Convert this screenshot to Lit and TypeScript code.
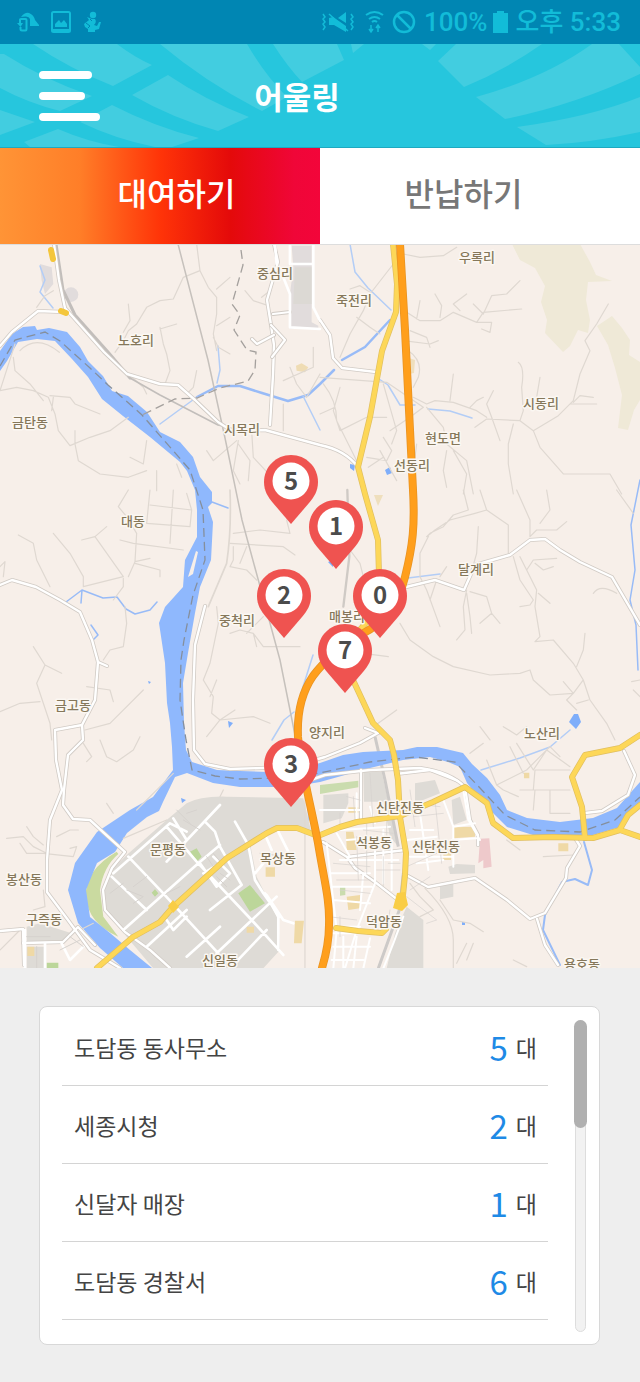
import { LitElement, html, svg, css } from "lit";
import { customElement, state } from "lit/decorators.js";

interface Station { name: string; count: number; }
interface Pin { x: number; y: number; count: number; }

const STATIONS: Station[] = [
  { name: "도담동 동사무소", count: 5 },
  { name: "세종시청", count: 2 },
  { name: "신달자 매장", count: 1 },
  { name: "도담동 경찰서", count: 6 },
];

// Tip of each pin, in map units (640 x 723).
const PINS: Pin[] = [
  { x: 291, y: 279, count: 5 },
  { x: 336, y: 324, count: 1 },
  { x: 284, y: 393, count: 2 },
  { x: 380, y: 393, count: 0 },
  { x: 345, y: 448, count: 7 },
  { x: 291, y: 562, count: 3 },
];

const PLACES: [string, number, number][] = [
  ["중심리", 275, 278], ["우록리", 477, 262], ["죽전리", 354, 305], ["노호리", 136, 345],
  ["금탄동", 30, 427], ["시목리", 242, 434], ["시동리", 541, 408], ["현도면", 443, 443],
  ["선동리", 412, 470], ["대동", 133, 526], ["달계리", 476, 574], ["중척리", 237, 625],
  ["매봉리", 347, 621], ["금고동", 73, 710], ["양지리", 327, 737], ["노산리", 542, 738],
  ["문평동", 168, 854], ["신탄진동", 400, 812], ["석봉동", 374, 847], ["신탄진동", 436, 851],
  ["목상동", 278, 863], ["봉산동", 24, 884], ["구즉동", 44, 924], ["덕암동", 384, 926],
  ["신일동", 220, 965], ["용호동", 582, 969],
];

const ORANGE = "M400 244L405 330L410 430L413 490C415 525 413 545 405 577C398 605 385 622 362 634C340 647 325 660 313 676C300 695 297 715 298 737C301 770 311 805 318 843C324 880 330 900 329 925C329 945 325 958 322 968";
const YELLOWS = [
  "M393 244L397 284L396 312L382 351L370 417L358 467L365 494L378 540L379 575L377 610L358 632L345 655L353 680L373 723L390 740L394 755L398 780L400 817L406 853L405 875L402 905",
  "M97 968L133 937L160 922L173 907L227 858L267 833L277 828L297 828L318 836L340 827L357 822L400 816L433 802L465 787L487 803L493 823L513 838L553 837L593 838L620 830L640 837",
  "M620 829L628 815L640 805",
  "M585 838L582 807L572 777L585 755L620 748L640 735",
  "M336 928L358 931L382 933L386 929",
];
const WHITES = [
  "M0 346L12 332L38 311L64 312",
  "M54 244L59 280L65 308L104 352L127 374L160 384L178 385L195 400L218 422L232 431L265 430L320 445Q345 450 358 467",
  "M274 244L278 262L267 300L271 325L274 345L273 375L270 425",
  "M320 320L330 335L333 358L342 368L376 372",
  "M0 585L12 580L36 587L60 600L80 612L92 640L98 662L95 700L82 725L55 730L56 760L62 790L50 820L47 860L47 892L68 920L90 950L120 968",
  "M98 662L107 666", "M82 725L83 740L68 755L64 790L63 805L73 819L90 820L103 832L125 852L112 868L103 890L105 910L125 932L150 950L170 968",
  "M205 606L195 645L193 700L194 750L205 764L230 769L290 767L325 757L360 743L378 733",
  "M290 787L325 775L370 770L420 768Q450 772 465 787L470 820L478 835L478 845",
  "M406 587L435 580L464 590L475 565L510 555L530 540L545 539L560 550L580 562L612 577L640 625",
  "M396 774L430 770L458 781", "M378 733L365 728", "M575 838L580 846L567 868L566 878L545 913L530 919L507 900L475 878L428 887L408 876",
  "M537 919L545 945L558 965", "M624 751L635 775L628 795L602 811L585 813",
  "M361 770L361 818", "M323 842L347 857L405 850", "M347 857L355 868L375 882L398 900",
  "M0 931L23 929L24 965", "M23 943L63 942L78 927L95 945",
];
const RIVER = "M0 351L12 334L23 327L35 326L37 330L49 328L67 332L80 347L88 361L103 376L112 391L128 396L147 412L160 432L180 442L193 457L200 477L212 492L212 503L208 507L213 522L211 560L200 587L195 613L188 653L183 683L184 723L186 750L192 762L217 770L240 771L267 772L295 770L320 763L343 755L363 752L403 750L417 747L437 747L463 753L472 764L487 778L500 795L507 810L527 818L560 822L593 818L617 808L640 782V802L620 827L593 835L533 835L507 827L490 810L467 783L460 767L448 762L430 757L403 760L370 768L320 782L290 787L240 787L213 783L187 773L175 777L163 802L159 811L147 817L127 833L115 852L97 863L86 890L90 917L110 933L130 950L152 968H123L100 948L78 923L68 890L75 863L97 832L130 810L153 797L173 770L172 747L170 723L167 703L165 663L159 623L165 607L183 587L185 560L197 537L197 510L195 490L187 471L180 462L150 437L123 416L102 399L88 377L72 359L55 341L37 339L18 342L7 361L0 371Z";

const mapArt = () => svg`
  <rect y="244" width="640" height="726" fill="#f7efe9"/>
  <path fill="#efe9d7" d="M512 244H580L590 262L596 275L612 281L588 282L586 300L590 320L588 333L578 330L570 346L563 352L545 333L547 320L541 302L545 286L535 268L520 260Z"/>
  <path fill="#efe9d7" d="M597 326L612 316L622 328L630 340L629 355L640 362V400L634 410L628 430L618 428L622 395L615 368L608 345Z"/>
  <g transform="translate(0 244) scale(.3333)">
    <g fill="#e1dcdc"><path d="M875 5H935V235L955 245V255L870 255V150L880 70Z"/><path d="M120 60L155 70L160 120L135 150L125 110Z"/><circle cx="213" cy="152" r="22"/></g>
    <path fill="#dcd9d4" d="M885 70H935V180H880Z"/>
    <path fill="#efdcb4" d="M888 365L905 358L925 370L915 385L890 380Z"/>
  </g>
  <path fill="#efdfbd" d="M409 358L415 360L414 373L409 374ZM374 495L383 495L378 506Z"/>
  <g transform="translate(0 730) scale(.3333)">
    <path fill="#dedbd6" d="M500 270L560 220Q600 198 680 200L910 205L935 310L880 292L820 300L750 340L770 440L800 500L835 570L840 660L790 715H460L380 620L320 540L310 480L335 420L380 375Z"/>
    <path fill="#dedbd6" d="M80 590L120 580L215 610L180 640H80ZM80 650H135V715H80Z"/>
    <path fill="#cadaa0" d="M350 365Q255 420 257 500Q265 580 355 620L310 560L300 480Q310 410 355 372Z"/>
    <path fill="#bcd69a" d="M570 365L590 355L605 380L590 395ZM715 490L750 465L795 520L750 545ZM455 488L465 478L475 490L465 500ZM140 698H175V715H140Z"/>
    <path fill="#efd9a6" d="M797 412H825V440H797ZM885 572H912L905 640H882ZM740 590H762V608H740ZM82 650H103V678H82Z"/>
  </g>
  <g transform="translate(320 730) scale(.3333)">
    <path fill="#dedbd6" d="M130 125L185 125L235 350L210 320L190 215H132ZM10 195L85 190V220L65 265L10 280ZM285 160L345 150L360 190L285 220ZM395 210L420 200L440 270L400 285ZM385 410L410 402L465 405V430L390 432ZM360 465L400 460V500L360 508ZM260 530L310 570V715H200L225 610Z"/>
    <path fill="#cadcae" d="M0 165L115 152V172L0 192ZM60 470L76 468V495L60 497Z"/>
    <path fill="#efd9a6" d="M78 305H100L110 360H80ZM400 292L465 290V320L400 325ZM370 345H393V390H370ZM80 500L120 495V535L85 540ZM715 340H745V364H715ZM612 128H628V145H612ZM85 232H115V248H85Z"/>
    <path fill="#eec9cb" d="M480 326L508 325L515 410L490 415V390L475 400Z"/>
    <path stroke="#cdcac8" stroke-width="9" fill="none" d="M165 20L195 150L235 350M250 430L238 540L175 715"/>
  </g>
  <path d="${RIVER}" fill="#8fb8fd"/>
  <path d="M188 577L196 551L198 552L193 574Z" fill="#f7efe9"/>
  <g fill="none" stroke="#98bbf7" stroke-linecap="round" stroke-linejoin="round">
    <path stroke-width="2.5" d="M197 397L218 386L240 386L262 393L288 401L308 395L320 384L334 370M342 360L365 347L390 320"/>
    <path stroke-width="1.5" stroke="#b3cdf6" d="M160 424L175 413L197 397M217 383L220 370L218 346M303 396L320 430M350 244L355 272L368 288L391 310M376 377L388 385L400 405L415 405M428 409L450 411L472 418M40 266L45 280L40 292L53 308"/>
    <path stroke-width="1.5" d="M66 602L82 590L103 598L117 597L126 609L135 614L150 610L157 602M82 590L81 603M91 625L98 635L93 640M212 502L228 508M640 480L631 525L635 570L630 600L636 625L638 670"/>
    <path stroke-width="1.5" stroke="#b3cdf6" d="M272 740L284 720L294 712M302 690L313 655M481 770L520 758L550 747L570 730M306 790L309 820M408 578L440 574M482 563L510 555"/>
    <path stroke-width="2" d="M584 842L592 870L588 885L575 879L562 882L545 915L543 930L560 965"/>
  </g>
  <path fill="#7faefa" d="M569 722L574 714H578L581 722L576 729ZM350 464L355 465L354 471L350 468ZM385 470L390 467L392 473L387 475ZM181 798L186 800L182 803ZM228 721L233 723L229 728ZM328 562L333 560V567ZM148 681L151 682L149 684ZM462 922L465 922V925H462Z"/>
  <g fill="none" stroke="#dfd8d1" stroke-width="3.6" stroke-linejoin="round" stroke-linecap="round">
    <g transform="translate(0 244) scale(.3333)">
      <path d="M110 190L135 155L160 140M345 325L370 290L385 260L410 240L440 190L480 170L520 165L550 100L600 80L625 130L650 160V210L640 270L650 320M600 80L590 0M650 135L690 100M650 245L690 220M640 280L655 310L690 330M385 180L390 230L370 265M480 250L490 300L500 330L510 380L495 420M480 255L530 240M385 390L430 430L440 450M0 440L50 430L100 440L145 460L165 510L175 560L210 605L270 580L330 560L385 520M40 340L45 380L90 420L130 470M60 320Q110 270 178 325M150 455L210 460L225 480L300 510M225 560L225 600L235 650L300 690L385 700L440 680M440 590L430 660L390 640M0 440L45 300M545 700L530 660M470 680V740M620 620L640 650L710 590M715 600L750 650L745 710M755 560L760 640L830 715M715 590L700 680L720 720M940 310V370L850 410M735 140L760 170L805 185M785 160L810 140M870 370L890 420L920 460L960 390M850 480L850 560M590 380L580 430L560 450M160 460L155 500"/>
    </g>
    <g transform="translate(320 244) scale(.3333)">
      <path d="M250 30L300 40L370 35L410 10M220 60L150 150L130 200L90 270L60 340M245 195L300 230H360L400 205L470 235L490 205L605 195M460 180L490 210L515 155L560 150L600 110M345 150L365 185L360 220M440 150L400 180L420 200M300 170L290 225M470 235L515 235L510 265L485 255M250 290L330 300L355 290M270 260L320 280L330 310M110 220L150 250L180 270M90 135L120 125L150 145M265 320Q310 350 295 400L280 430M595 355Q615 370 605 430L610 500L600 530M660 400L650 460L670 480M865 180L830 240L795 290L810 320L780 390L760 470L715 515L640 560L600 530L500 525L465 550M750 480H830M760 475L780 455L820 460M400 390L390 470M520 440L500 480L515 520L540 590M450 490L470 470L490 460M280 460L320 480L345 470L400 475L470 500L500 520M0 400L200 415L310 490M310 490L270 520L210 560M320 490L370 550L380 600L440 650L460 750M580 540L565 600V660L580 750M640 560L660 610L730 690H870L905 750M190 420L210 490L230 560L215 600M60 430L40 500L60 560L140 520L200 520M140 640L200 650L215 620L190 580M380 620L370 680L380 730M400 620L440 690L430 750M290 600L280 680M10 420Q50 470 50 530L110 650M180 620L230 710M145 670L190 640M0 510L45 490"/>
    </g>
    <g transform="translate(0 490) scale(.3333)">
      <path d="M385 0L355 50L380 80L410 130L405 215L385 260M360 150L400 160L550 180M450 0L440 100L570 110L575 60L450 45M520 0L510 160M575 60L560 10M405 215L450 205M405 220L480 240V260M55 135L100 160L110 210L150 290M160 130L210 190L250 260V290L370 260L285 140L245 150M285 140L320 110M370 265V290L340 330M375 350L380 400L370 470L330 480L310 510M100 470L135 525L110 580L130 640L150 700L155 750M135 525L185 550M0 665L60 640L120 635M260 590L330 600L340 635M255 720L330 700L430 600M0 230L15 215L10 260M650 350L655 400L630 520L610 570L640 620L635 670L660 690L760 680L810 700M700 170V210L690 230L740 240L770 270M700 130L780 120L870 130L860 90M690 160L850 170L885 195M740 170L720 220M690 430L720 420L760 430L790 470H900M740 430L770 400L790 380M760 430L770 470M650 570L630 620M660 690L620 740M660 690L705 660"/>
      <path d="M690 0Q695 120 680 220L625 350" stroke-width="5"/>
    </g>
    <g transform="translate(320 490) scale(.3333)">
      <path d="M430 0L445 60L400 75L370 110L330 130L300 190V260L320 300L360 410M330 130L320 140L345 120L390 90L465 70L500 60L565 105V190M480 0L500 60M590 0L630 90V140L650 120L710 120L740 95M680 0L690 60L660 100M475 110L470 190L450 260M440 300L430 350L435 420L410 450M450 305L500 320L515 370L540 400M440 310L450 380L455 430M515 370L480 400M600 200L620 240L650 300L645 350L660 440L645 455L700 450L760 520L790 570L810 630L860 700L885 750M580 200L600 270L640 330L630 345L600 350M620 240L640 210L710 205M655 310L690 340M645 220L670 240L700 230M240 400L270 450L340 500L400 530L510 555L600 550L630 540L640 570L690 615L760 610L790 570M795 430L790 480L770 530M730 575L760 610L740 630L770 660M770 640L805 630M130 490L205 500M230 660L160 710M90 180L120 220L130 260M350 270L330 330M380 230L360 260M890 0L940 70M820 310Q840 280 890 310M480 710L510 750M550 710L590 735L620 710M960 570L935 575M940 600L960 620M0 600"/>
      <path d="M82 0L88 200L70 350" stroke="#cfcac5" stroke-width="7"/>
    </g>
    <g transform="translate(0 730) scale(.3333)">
      <path d="M250 40L275 80L260 95M300 30L320 80L350 95L400 60L420 20M320 220L340 250M80 290L100 320L130 345M20 325L70 320L100 350L140 370M60 340L80 370H130L220 380L230 350L210 355M170 320L210 300L235 300M130 480L135 530L100 540M0 660L60 600M240 600L280 580M410 240L520 130M370 325L500 270M670 180L660 200M915 200V715M860 180V200"/>
    </g>
    <g transform="translate(320 730) scale(.3333)">
      <path d="M500 90L530 165L620 120L690 50L720 80M530 165L550 180L595 200M570 50L610 130M590 40L640 120L680 60L750 110M640 180L645 120H750M645 180L640 240M600 180H750M690 180V250H750M450 70L490 40M360 510L400 570L450 580L490 605M560 330L600 360M670 380L760 375M315 475Q400 560 400 630V715M270 460L300 500L340 540L300 560M440 640L410 700M460 640L440 690M620 710L580 690"/>
    </g>
    <path stroke-width="1.5" stroke="#c6c1bc" d="M178 244L208 360L225 438L242 520L280 660L296 740"/>
    <path stroke-width="3" stroke="#c2bebb" d="M56 244L63 290L75 315L108 352L130 378"/>
    <path stroke-width="1.5" stroke="#c2bebb" d="M130 378L160 395L218 425L240 430"/>
  </g>
  <g fill="none" stroke="#a4a09d" stroke-width="1.3" stroke-dasharray="9 5">
    <path d="M241 250L243 265L232 304L240 315L234 330L247 350L256 352L255 370L248 381L220 388L197 398L175 399L142 415"/>
    <path d="M0 366L15 340L45 332L60 341L90 368L108 385L142 415L190 470L203 510L205 560L193 595L184 640L181 660L180 700L186 740L192 770L215 776L240 779L280 778L320 773L370 762L415 757L455 762L480 788L505 815L535 830L580 832L615 820L640 797" stroke="#858f9d"/>
  </g>
  <g fill="none" stroke-linejoin="round" stroke-linecap="round">
    ${WHITES.map((d) => svg`<path d="${d}" stroke="#d1cbc5" stroke-width="4"/>`)}
    ${WHITES.map((d) => svg`<path d="${d}" stroke="#fff" stroke-width="2.4"/>`)}
    <path stroke="#d1cbc5" stroke-width="4" d="M273 314L290 312M274 335L257 344L252 339M271 325L285 340L272 357"/>
    <path stroke="#fff" stroke-width="2.2" d="M273 314L290 312M274 335L257 344L252 339M271 325L285 340L272 357"/>
    <g stroke="#fff" stroke-width="8">
      <path transform="translate(0 244) scale(.3333)" d="M825 0L830 60M940 0V190L960 230M870 0V60H935M850 100L870 150V250L960 255"/>
      <path transform="translate(0 730) scale(.3333)" d="M335 440L440 540M385 380L485 485L655 670M370 600L595 400L660 345M500 290L590 395L755 570L850 675M340 430L510 280L560 305M500 395L660 225M615 275L645 305L660 350L725 465L630 540M705 275L745 345L765 450L790 490L840 560M800 495L850 570L880 580M795 490L835 560V660M520 265L560 330M440 650L560 540M560 680L660 590M650 670L830 500M800 600L690 715M500 570L520 600L560 560M800 325L815 360M835 305L865 365M75 600V715M135 640V715M185 640L210 690L250 650M600 400L650 470L690 430L640 380M610 430L660 400M790 400L765 430"/>
      <path transform="translate(320 730) scale(.3333)" stroke-width="6" d="M20 340L50 600L40 715M50 310L90 380M370 210L400 290V410M300 250L325 420M430 180L445 270L480 330M45 590H120M30 610H180M165 360V460L110 600L75 715M130 430L120 540M60 390H235M30 430H150M40 470H155M40 510L150 520M190 300V460M215 330V480M150 230L165 280M60 300L210 290M80 330L200 320M270 300H340M260 330L350 320M290 400L370 390M0 240H120M110 190V270M400 290L465 280M395 330L470 325M270 380H400M70 620V715M110 620L100 715M150 625L130 715M40 650H150M35 690H130M250 560L220 640L190 715"/>
    </g>
    <g stroke="#d6d2ce" stroke-width="2">
      <path transform="translate(320 730) scale(.3333)" d="M60 250V300M100 200L105 270M150 130L160 290M200 270V340M40 400L150 410M50 450H150M60 480L150 490M110 320L115 450M140 270V430M270 220L360 230M280 260L370 250M345 210L365 400M270 180L285 290M190 380V470M205 400H240M170 420H240M260 410L350 370M270 480L330 440M260 500L350 570L320 580M25 560L110 570M130 300L220 310M80 200L120 210M60 560V620M210 540L200 600"/>
      <path transform="translate(0 730) scale(.3333)" stroke-width="3" d="M400 470L440 440M380 480L430 500L400 520M530 240L570 280M560 250L590 240M550 270L600 300M330 490L370 460M500 490L540 470M110 650V715M80 620H150M210 620L250 650M180 660L240 630M620 380L640 410M640 370L665 400M650 440L680 470M660 430L690 450M780 370L860 380"/>
    </g>
    ${YELLOWS.map((d) => svg`<path d="${d}" stroke="#e0bf60" stroke-width="6"/>`)}
    ${YELLOWS.map((d) => svg`<path d="${d}" stroke="#fdd758" stroke-width="4.6"/>`)}
    <path stroke="#f4c63c" stroke-width="6" d="M51 250L53 259M61 311L66 313"/>
    <path fill="#f9cd45" d="M397 893L405 892L408 905L402 911L393 908ZM173 900L179 907L173 913L168 906Z"/>
    <path d="${ORANGE}" stroke="#e99423" stroke-width="8"/>
    <path d="${ORANGE}" stroke="#ff9f1c" stroke-width="6.4"/>
  </g>`;

@customElement("bike-pin")
export class BikePin extends LitElement {
  static properties = { count: { type: Number } };
  declare count: number;

  static styles = css`
    :host { display: block; }
    .pin {
      display: grid;
      width: 54px;
      height: 69px;
      padding: 0;
      border: 0;
      background: none;
      font: 700 24px/50px "Noto Sans CJK KR", "Noto Sans", sans-serif;
      color: #4b4b4b;
      cursor: pointer;
    }
    .shape, .count { grid-area: 1 / 1; }
    .shape { width: 54px; height: 69px; }
    .count { text-align: center; }
  `;

  render() {
    return html`<button class="pin" type="button" aria-label="${this.count}대">
      <svg class="shape" viewBox="0 0 54 69" aria-hidden="true">
        <path fill="#ef5350" d="M27 0C12 0 0 12 0 27C0 36 4 42 9 48L27 69L45 48C50 42 54 36 54 27C54 12 42 0 27 0Z"/>
        <circle cx="27" cy="26" r="18.5" fill="#fff"/>
      </svg>
      <span class="count">${this.count}</span>
    </button>`;
  }
}

@customElement("app-root")
export class AppRoot extends LitElement {
  @state() tab = "rent";

  static styles = css`
    :host {
      display: block;
      min-height: 100vh;
      background: #eee;
      color: #444;
      font-family: "Noto Sans CJK KR", "Noto Sans", sans-serif;
    }
    .status {
      display: flex;
      align-items: center;
      justify-content: space-between;
      height: 44px;
      padding: 0 19px 0 17px;
      background: #0086b3;
      color: #12bcd8;
      font: 500 26px/44px Roboto, "Noto Sans CJK KR", sans-serif;
    }
    .group { display: flex; align-items: center; gap: 8px; }
    .group.left { gap: 11px; }
    .group svg { display: block; }
    .group .battery { margin: 0 0 0 -3px; }
    .header {
      display: grid;
      grid-template-columns: 1fr auto 1fr;
      align-items: center;
      height: 104px;
      box-sizing: border-box;
      border-bottom: 1px solid #1ea9c0;
      background: #26c6dd;
      overflow: hidden;
    }
    .rays {
      grid-area: 1 / 1 / 2 / 4;
      width: 100%;
      height: 103px;
    }
    .menu {
      grid-area: 1 / 1;
      justify-self: start;
      padding: 0;
      margin: 0 0 0 39px;
      border: 0;
      background: none;
      cursor: pointer;
    }
    .menu svg { display: block; }
    .title {
      grid-area: 1 / 2;
      margin: 0 46px 0 0;
      color: #fff;
      font-size: 31px;
      line-height: 48px;
      font-weight: 700;
    }
    .tabs { display: grid; grid-template-columns: 1fr 1fr; }
    .tab {
      height: 97px;
      padding: 0 0 8px;
      border: 0;
      border-bottom: 1px solid #ddd;
      background: #fff;
      color: #777;
      font: 500 32px/48px "Noto Sans CJK KR", sans-serif;
      cursor: pointer;
    }
    .tab.right { padding-right: 33px; }
    .tab.left { padding-left: 33px; }
    .tab.active {
      background: linear-gradient(90deg, #ff9436 0%, #ff7e28 25%, #ff3408 50%, #e40a0a 72%, #f00638 92%, #f3053a 100%);
      color: #fff;
    }
    .map { position: relative; overflow: hidden; }
    .art { display: block; width: 100%; height: auto; }
    .place {
      font-size: 13px;
      font-weight: 500;
      fill: #85775a;
      stroke: #fbf7f2;
      stroke-width: 3px;
      stroke-linejoin: round;
      paint-order: stroke;
      text-anchor: middle;
    }
    .marker { position: absolute; transform: translate(-50%, -100%); }
    .panel { padding: 38px 40px 38px 39px; }
    .card {
      display: flex;
      justify-content: space-between;
      gap: 26px;
      padding: 0 12px 12px 22px;
      border: 1px solid #d8d8d8;
      border-radius: 8px;
      background: #fff;
    }
    .list { flex: 1; margin: 0; padding: 1px 0 12px; list-style: none; }
    .row {
      display: flex;
      align-items: center;
      justify-content: space-between;
      height: 77px;
      padding: 0 11px 0 12px;
      border-bottom: 1px solid #d4d4d4;
      font-size: 23px;
      line-height: 36px;
    }
    .amount { display: flex; align-items: center; gap: 8px; }
    .number { color: #1e8ae6; font-size: 33px; }
    .scroll {
      display: grid;
      justify-items: center;
      width: 13px;
      margin-top: 13px;
    }
    .track, .thumb { grid-area: 1 / 1; border-radius: 7px; }
    .track { width: 9px; border: 1px solid #ddd; background: #f2f2f2; }
    .thumb { width: 13px; height: 108px; background: #b0b0b0; }
  `;

  private tabButton(id: string, label: string, side: string) {
    const active = this.tab === id;
    return html`<button type="button" role="tab" aria-selected=${active}
      class="tab ${side} ${active ? "active" : ""}"
      @click=${() => (this.tab = id)}>${label}</button>`;
  }

  private statusBar() {
    return html`<div class="status">
      <div class="group left" aria-hidden="true">
        <svg width="23" height="22" viewBox="0 0 23 22" fill="none" stroke="#12bcd8">
          <path fill="#12bcd8" stroke="none" d="M4 6Q8 1 12 2Q17 4 18 9L22 14V15H13V8Q12 5 8 5.500Z"/>
          <path stroke-width="2" d="M3 12V8.500Q3 8 4 8H8.500Q9.500 8 9.500 9V18Q9.500 19.500 8.500 19.500H5Q3.500 19.500 3.500 18V16"/>
          <path fill="#12bcd8" stroke="none" d="M0 12H6L3.500 16Z"/>
        </svg>
        <svg width="20" height="22" viewBox="0 0 20 22">
          <rect x="1" y="1" width="18" height="20" rx="1.500" fill="none" stroke="#12bcd8" stroke-width="2"/>
          <path fill="#12bcd8" d="M1 18H19V21H1ZM4 16V13L8 9L10 12L13 9L16 13V16Z"/>
        </svg>
        <svg width="20" height="22" viewBox="0 0 20 22" fill="#12bcd8">
          <circle cx="11" cy="4" r="3.200"/>
          <path d="M5 6L10 8H13Q15 11 12 14L15 15L17 11H19L17 18L13 19V21H6V18L3 16L2 13L7 9Z"/>
          <path d="M4 12L8 15L6 17M8 8L10 10" stroke="#0086b3" stroke-width="1" fill="none"/>
        </svg>
      </div>
      <div class="group">
        <svg width="36" height="24" viewBox="0 0 36 24" fill="none" stroke="#12bcd8" stroke-width="2" aria-hidden="true">
          <path stroke-width="1.500" d="M2 4L4 7L2 9L4 12L2 14L4 17L2 20M30 4L32 7L30 9L32 12L30 14L32 17L30 20M8 4L27 21"/>
          <path fill="#12bcd8" stroke="none" d="M8 8V15H13L25 22V16L12 7ZM17 8L25 2V13Z"/>
        </svg>
        <svg width="19" height="24" viewBox="0 0 19 24" fill="none" stroke="#12bcd8" stroke-width="2" aria-hidden="true">
          <path d="M1 5Q9.500 -1 18 5M4 9Q9.500 5 15 9M7 12Q9.500 10 12 12"/>
          <path stroke-width="1.500" d="M6 15V21M4 19L6 22L8 19M13 22V16M11 18L13 15L15 18"/>
        </svg>
        <svg width="24" height="24" viewBox="0 0 24 24" fill="none" stroke="#12bcd8" stroke-width="2.500" aria-hidden="true">
          <circle cx="12" cy="12" r="10"/><path d="M5 5L19 19"/>
        </svg>
        <span>100%</span>
        <svg class="battery" width="15" height="24" viewBox="0 0 15 24" fill="#12bcd8" aria-hidden="true"><path d="M0 3H4V1H11V3H15V23H0Z"/></svg>
        <span>오후 5:33</span>
      </div>
    </div>`;
  }

  render() {
    return html`
      ${this.statusBar()}
      <header class="header">
        <svg class="rays" viewBox="0 44 640 103" preserveAspectRatio="xMidYMid slice" fill="#42cde0" aria-hidden="true">
          <path d="M33 44H117L152 80L152 79L113 105Q70 80 33 44Z" display="none"/>
          <path d="M33 44H117Q134 57 152 65L113 86Q70 69 33 44ZM160 44H247Q265 75 287 97L262 111Q208 84 160 44ZM273 44H337L344 60L302 82Q287 66 273 44Z"/>
          <path d="M132 95L168 75Q205 100 249 117L218 131Q172 118 132 95ZM0 54H4Q45 80 92 96L60 111Q28 103 0 88ZM112 105Q155 127 199 138L172 147H155Q115 139 80 122ZM0 110L35 122L0 135ZM24 142L58 129Q88 142 119 147H30Z"/>
          <path d="M351 44H364L353 53ZM422 44H436L430 50ZM456 44H542Q505 70 464 87L438 61ZM592 44H619L640 67V74Q575 105 505 119L476 97Q545 78 592 44ZM640 97V132Q590 143 546 145L517 127Q590 117 640 97Z"/>
        </svg>
        <button class="menu" type="button" aria-label="메뉴">
          <svg width="61" height="50" viewBox="0 0 61 50" fill="#fff" aria-hidden="true">
            <rect width="53" height="8" rx="4"/><rect y="21" width="46" height="8" rx="4"/><rect y="42" width="61" height="8" rx="4"/>
          </svg>
        </button>
        <h1 class="title">어울링</h1>
      </header>
      <nav class="tabs" role="tablist">
        ${this.tabButton("rent", "대여하기", "left")}
        ${this.tabButton("return", "반납하기", "right")}
      </nav>
      <section class="map" aria-label="대여소 지도">
        <svg class="art" viewBox="0 245 640 723">
          ${mapArt()}
          ${PLACES.map(([n, x, y]) => svg`<text class="place" x=${x} y=${y}>${n}</text>`)}
        </svg>
        ${PINS.map((p) => html`<bike-pin class="marker" .count=${p.count}
          style="left:${(p.x / 640) * 100}%;top:${(p.y / 723) * 100}%"></bike-pin>`)}
      </section>
      <main class="panel">
        <div class="card">
          <ul class="list">
            ${STATIONS.map((s) => html`<li class="row">
              <span>${s.name}</span>
              <span class="amount"><span class="number">${s.count}</span><span>대</span></span>
            </li>`)}
          </ul>
          <div class="scroll" aria-hidden="true"><div class="track"></div><div class="thumb"></div></div>
        </div>
      </main>`;
  }
}
